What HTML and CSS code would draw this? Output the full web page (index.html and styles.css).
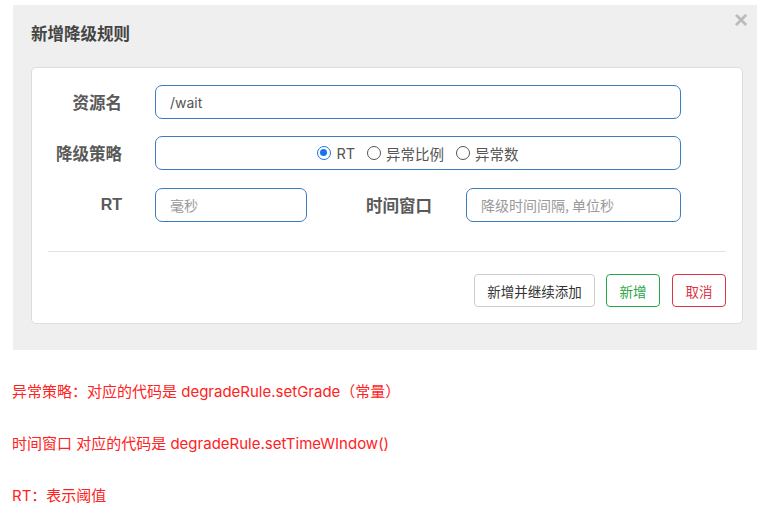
FILE: index.html
```html
<!DOCTYPE html>
<html lang="zh">
<head>
<meta charset="utf-8">
<link rel="stylesheet" href="styles.css">
</head>
<body>
<div class="panel">
  <div class="head">
    <h3 class="title">新增降级规则</h3>
    <span class="close">×</span>
  </div>
  <div class="card">
    <div class="row">
      <label class="lbl">资源名</label>
      <div class="field grow"><span class="val">/wait</span></div>
    </div>
    <div class="row">
      <label class="lbl">降级策略</label>
      <div class="field grow center">
        <span class="radio"><span class="dot on"></span>RT</span>
        <span class="radio"><span class="dot"></span>异常比例</span>
        <span class="radio"><span class="dot"></span>异常数</span>
      </div>
    </div>
    <div class="row">
      <label class="lbl latin">RT</label>
      <div class="field small"><span class="ph">毫秒</span></div>
      <label class="lbl wide">时间窗口</label>
      <div class="field mid"><span class="ph">降级时间间隔, 单位秒</span></div>
    </div>
    <div class="rule"></div>
    <div class="actions">
      <button class="btn more">新增并继续添加</button>
      <button class="btn ok">新增</button>
      <button class="btn cancel">取消</button>
    </div>
  </div>
</div>
<div class="notes">
  <p>异常策略：对应的代码是 degradeRule.setGrade（常量）</p>
  <p>时间窗口 对应的代码是 degradeRule.setTimeWIndow()</p>
  <p>RT：表示阈值</p>
</div>
</body>
</html>
```
FILE: styles.css
```css
* { box-sizing: border-box; }
body {
  margin: 0;
  background: #fff;
  font-family: "Noto Sans CJK SC", "Noto Sans", sans-serif;
  color: #555;
}
.panel {
  margin: 5px 0 0 13px;
  width: 744px;
  height: 345px;
  background: #efefef;
  padding: 0 9px 0 18px;
}
.head {
  height: 62px;
  display: flex;
  align-items: flex-start;
  justify-content: space-between;
}
.title {
  margin: 16px 0 0 0;
  font-size: 16.5px;
  line-height: 24px;
  font-weight: bold;
  color: #444;
}
.close {
  margin-top: 3px;
  font-family: "Liberation Sans", sans-serif;
  font-size: 24px;
  font-weight: bold;
  line-height: 24px;
  color: #bbb;
}
.card {
  width: 712px;
  background: #fff;
  border: 1px solid #ddd;
  border-radius: 5px;
  padding: 17px 16px 16px 16px;
}
.row {
  display: flex;
  align-items: center;
  margin-right: 45px;
  margin-bottom: 17px;
}
.row + .row + .row { margin-top: 18px; margin-bottom: 0; }
.lbl {
  width: 74px;
  margin-right: 33px;
  text-align: right;
  font-size: 16.5px;
  font-weight: bold;
  color: #595959;
  line-height: 24px;
}
.lbl.latin { font-family: "Liberation Sans", sans-serif; font-size: 16px; }
.lbl.wide { width: 125px; margin-right: 34px; }
.field {
  height: 34px;
  border: 1px solid #3a7cc0;
  border-radius: 7px;
  display: flex;
  align-items: center;
  padding: 0 14px;
  font-size: 14px;
  background: #fff;
}
.grow { flex: 1; }
.small { width: 152px; }
.mid { width: 215px; }
.center { justify-content: center; padding: 0; }
.val { color: #555; font-family: "Inter", sans-serif; font-size: 14px; }
.ph { color: #999; }
.radio {
  display: inline-flex;
  align-items: center;
  margin-left: 12px;
  color: #555;
  font-family: "Inter", "Noto Sans CJK SC", sans-serif;
  font-size: 14.5px;
}
.radio:first-child { margin-left: 0; }
.dot {
  width: 14px;
  height: 14px;
  border: 1px solid #555;
  border-radius: 50%;
  margin-right: 5px;
  position: relative;
}
.dot.on {
  border-color: #1a73e8;
  border-width: 1.5px;
}
.dot.on::after {
  content: "";
  position: absolute;
  left: 2px; top: 2px;
  width: 7px; height: 7px;
  border-radius: 50%;
  background: #1a73e8;
}
.rule {
  height: 1px;
  background: #e3e3e3;
  margin-top: 29px;
}
.actions {
  display: flex;
  justify-content: flex-end;
  margin-top: 22px;
}
.btn {
  height: 33px;
  padding: 0;
  border: 1px solid #ccc;
  border-radius: 4px;
  background: #fff;
  color: #333;
  font-family: "Noto Sans CJK SC", sans-serif;
  font-size: 13.5px;
}
.btn.more { width: 121px; }
.btn.ok { width: 54px; margin-left: 11px; border-color: #28a745; color: #28a745; }
.btn.cancel { width: 54px; margin-left: 12px; border-color: #dc3545; color: #dc3545; }
.notes {
  padding-left: 12px;
  padding-top: 31px;
}
.notes p {
  margin: 0 0 30px 0;
  color: #f22;
  font-family: "Inter", "Noto Sans CJK SC", sans-serif;
  font-size: 15px;
  line-height: 22px;
}
```
